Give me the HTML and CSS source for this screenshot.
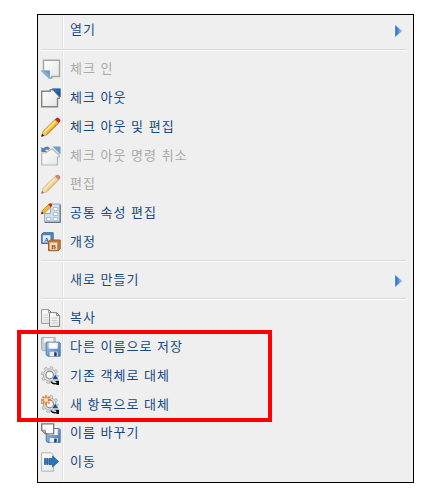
FILE: index.html
```
<!DOCTYPE html>
<html lang="ko">
    <head>
        <meta charset="UTF-8" />
        <meta name="viewport" content="width=device-width, initial-scale=1.0" />
        <title>Menu</title>
        <link rel="stylesheet" href="styles.css">
    </head>
    <body>
        <!-- shared shapes -->
        <svg class="defs" width="0" height="0">
            <defs>
                <linearGradient id="paper" x1="0" y1="0" x2="1" y2="1">
                    <stop offset="0" stop-color="#fff" />
                    <stop offset="1" stop-color="#e2e5e6" />
                </linearGradient>
                <linearGradient id="blue" x1="0" y1="0" x2="1" y2="1">
                    <stop offset="0" stop-color="#3f7fc4" />
                    <stop offset="1" stop-color="#0e4587" />
                </linearGradient>
                <linearGradient id="arrow" x1="0" y1="0" x2="1" y2="0">
                    <stop offset="0" stop-color="#1d64c4" />
                    <stop offset="1" stop-color="#8cc4fa" />
                </linearGradient>
                <linearGradient id="disk" x1="0" y1="0" x2="1" y2="1">
                    <stop offset="0" stop-color="#a9c6ea" />
                    <stop offset="1" stop-color="#4474b4" />
                </linearGradient>
                <g id="pencil">
                    <path d="M.4 19.5l1.8-5.4L14.6 2l3.5 3.5L5.8 17.7z" fill="#f3bf35" stroke="#a7762a" stroke-width=".7" />
                    <path d="M2.8 14.6L14.8 2.8l1.3 1.2L3.9 15.9z" fill="#ffe58a" />
                    <path d="M5 17.4L17.2 5.2l.7.7L5.8 17.9z" fill="#c98a20" />
                    <path d="M13.9 2.6l1.6-1.5c1.8-1.5 5 1.6 3.5 3.5l-1.6 1.6z" fill="#c3251d" />
                    <path d="M13.3 3.2l.8-.8 3.6 3.7-.8.8z" fill="#d9b060" />
                    <path d="M.3 19.6l1.9-5.1 1.5 1.3 1.9 1.8z" fill="#e8c99a" />
                    <path d="M.2 19.8l1-3 2 1.9z" fill="#2c1a08" />
                </g>
                <g id="gear">
                    <circle cx="8.7" cy="9" r="7.4" fill="none" stroke="#a2a2a2" stroke-width="2.6" stroke-dasharray="3.1 2.7" />
                    <circle cx="8.7" cy="9" r="6.3" fill="#e0e0e0" stroke="#a8a8a8" stroke-width="1" />
                    <circle cx="8.7" cy="9" r="7.2" fill="none" stroke="#e2e2e2" stroke-width="1.8" stroke-dasharray="2 3.65" stroke-dashoffset="-.5" />
                    <circle cx="8.7" cy="9" r="3.8" fill="#f5f5f5" stroke="#8c8c8c" stroke-width="1.2" />
                </g>
                <g id="swap">
                    <path d="M14.2 8l3.4 5.6h-6.6z" fill="#164f94" stroke="#eee" stroke-width=".5" />
                    <path d="M9.8 15.6c1.8 2.3 4 2.6 6 1.8" fill="none" stroke="#111" stroke-width="1.5" />
                    <path d="M14 14.8h4v4.2h-3l1-1.6z" fill="#111" />
                </g>
                <g id="floppy">
                    <path d="M.5.5h13l1 1v13H2L.5 13z" fill="url(#disk)" stroke="#527bb0" />
                    <path d="M3 1h9v6H3z" fill="#f7faff" />
                    <path d="M4 10h8v4.5H4z" fill="#e8edf4" />
                    <path d="M8.5 10.5H11v4H8.5z" fill="#183d70" />
                </g>
                <symbol id="submenu" viewBox="0 0 7 12">
                    <path d="M.4.4L6.5 6 .4 11.6z" fill="url(#arrow)" stroke="#448bd8" stroke-width=".6" />
                </symbol>
            </defs>
        </svg>

        <div class="screen">
            <ul class="menu">
                <li class="item">
                    <span class="icon"></span>
                    <span class="label">열기</span>
                    <svg class="more"><use href="#submenu" /></svg>
                </li>
                <li class="separator"></li>
                <li class="item disabled">
                    <svg class="icon" viewBox="0 0 20 20">
                        <path d="M2.5 11V1.3h16v16.2h-7.7v1.5H9" fill="url(#paper)" stroke="#a5a79f" stroke-width="1.4" />
                        <path d="M.3 11.8h8.2v8z" fill="#6e9bce" stroke="#6289b6" stroke-width=".6" />
                        <path d="M.5 12l3 .2 4.7 4.6v2.6z" fill="#88afd9" />
                    </svg>
                    <span class="label">체크 인</span>
                </li>
                <li class="item">
                    <svg class="icon" viewBox="0 0 20 20">
                        <path d="M.7 3.3h8.6V1.8h3l6 6.8v1.8h-1.8v8.4H.7z" fill="url(#paper)" stroke="#85877d" stroke-width="1.4" />
                        <path d="M11.3.8h8v8z" fill="url(#blue)" stroke="#164b8c" stroke-width=".6" />
                    </svg>
                    <span class="label">체크 아웃</span>
                </li>
                <li class="item">
                    <svg class="icon" viewBox="0 0 20 20"><use href="#pencil" /></svg>
                    <span class="label">체크 아웃 및 편집</span>
                </li>
                <li class="item disabled">
                    <svg class="icon" viewBox="0 0 20 20">
                        <path d="M.7 7v12h15.8v-8h1.8V9l-7-6L8 4.5 5 7z" fill="url(#paper)" stroke="#b8b9b3" stroke-width="1.2" />
                        <path d="M11.5.5h8v8z" fill="#6f9dce" />
                        <path d="M.3 1l2 1.6C4 .4 7 .3 9 2.3L7.3 4C6 3.2 5 3.3 4.2 4.2L6 6H.3z" fill="#557fae" />
                    </svg>
                    <span class="label">체크 아웃 명령 취소</span>
                </li>
                <li class="item disabled">
                    <svg class="icon faded" viewBox="0 0 20 20"><use href="#pencil" /></svg>
                    <span class="label">편집</span>
                </li>
                <li class="item">
                    <svg class="icon" viewBox="0 0 20 20">
                        <path d="M3.6 10.5h6V1h9.5v18.2H3.6z" fill="#d3e0ee" stroke="#9aabbd" />
                        <path d="M4 19.3h15.2V1.5" fill="none" stroke="#65768a" stroke-width="1.2" />
                        <path d="M12.3 4.5h4.4v3h-4.4zM12.3 9.5h4.4v3h-4.4zM12.3 14.5h4.4v3h-4.4zM5.5 14.5h4.4v3H5.5z" fill="#fff" stroke="#a4b9d0" stroke-width=".9" />
                        <path d="M.3 10.8l1.2-3.4L8.3.8l2.3 2.3-6.7 6.5z" fill="#f5b92c" stroke="#b07820" stroke-width=".7" />
                        <path d="M7.4 1.7L8.8.4c1.2-.9 3 .9 2.2 2.1L9.7 3.9z" fill="#c3251d" />
                        <path d="M.1 11.2l.8-2.5 1.7 1.6z" fill="#2c1a08" />
                    </svg>
                    <span class="label">공통 속성 편집</span>
                </li>
                <li class="item">
                    <svg class="icon" viewBox="0 0 20 20">
                        <path d="M.6 2.3l1.6-1.6h10v9l-1.6 1.8H.6z" fill="#5683b4" stroke="#42709f" />
                        <path d="M1.8 3.2h7.6v7.2H1.8z" fill="#e2edf8" />
                        <text x="5.6" y="9.6" class="letter letter-a">A</text>
                        <path d="M7.5 9.6L9.2 8h10v8.8l-1.7 1.9h-10z" fill="#bd7840" stroke="#9f5c2e" />
                        <path d="M8.6 10.5h7.7v7.2H8.6z" fill="#f8dfbc" />
                        <text x="12.5" y="16.9" class="letter letter-b">B</text>
                    </svg>
                    <span class="label">개정</span>
                </li>
                <li class="separator short"></li>
                <li class="item">
                    <span class="icon"></span>
                    <span class="label">새로 만들기</span>
                    <svg class="more"><use href="#submenu" /></svg>
                </li>
                <li class="separator short"></li>
                <li class="item">
                    <svg class="icon" viewBox="0 0 20 20">
                        <path d="M.6 1.6h7l3 3v10.8H.6z" fill="url(#paper)" stroke="#96968d" />
                        <path d="M7.6 1.6v3h3" fill="none" stroke="#96968d" />
                        <path d="M2.5 7h5M2.5 9.5h5M2.5 12h5" stroke="#d0d0cb" />
                        <path d="M8.6 4.6h7l3 3v10.8h-10z" fill="url(#paper)" stroke="#85857b" />
                        <path d="M15.6 4.6v3h3" fill="none" stroke="#85857b" />
                        <path d="M10.7 10h5.5M10.7 12.5h5.5M10.7 15h5.5" stroke="#c8c8c3" />
                    </svg>
                    <span class="label">복사</span>
                </li>
                <li class="item">
                    <svg class="icon" viewBox="0 0 20 20">
                        <path d="M.6.6h13.5v13H2L.6 12.5z" fill="#cbd0d4" stroke="#a5a9ad" />
                        <path d="M3 1h9v5H3z" fill="#f4f4f4" />
                        <use href="#floppy" x="4.7" y="4.7" />
                    </svg>
                    <span class="label">다른 이름으로 저장</span>
                </li>
                <li class="item">
                    <svg class="icon" viewBox="0 0 20 20">
                        <use href="#gear" />
                        <use href="#swap" />
                    </svg>
                    <span class="label">기존 객체로 대체</span>
                </li>
                <li class="item">
                    <svg class="icon" viewBox="0 0 20 20">
                        <use href="#gear" />
                        <use href="#swap" />
                        <path d="M5 0v10M0 5h10M1.5 1.5l7 7M8.5 1.5l-7 7" stroke="#ee6a2e" stroke-width="1.3" />
                        <circle cx="5" cy="5" r="2.2" fill="#ffe3a0" />
                    </svg>
                    <span class="label">새 항목으로 대체</span>
                </li>
                <li class="item">
                    <svg class="icon" viewBox="0 0 20 20">
                        <use href="#floppy" x="4.7" y="5" />
                        <path d="M.7.8h12v10H4.5L.7 7.2z" fill="#fcfcfc" stroke="#777970" stroke-width="1.3" />
                        <path d="M.7 7.2h3.8v3.6z" fill="#bbbcb6" stroke="#777970" stroke-width=".7" />
                    </svg>
                    <span class="label">이름 바꾸기</span>
                </li>
                <li class="item">
                    <svg class="icon" viewBox="0 0 20 20">
                        <path d="M.6.8h9.7l2.3 2.3v16.1H.6z" fill="url(#paper)" stroke="#b5b6a9" />
                        <path d="M3.5 6.5h1.3v6H3.5zM5.7 6.5h1.4v6H5.7zM8 6.5h3.6V4l6 5.5-6 5.5v-2.5H8z" fill="#2b75ba" stroke="#175391" stroke-width=".7" />
                    </svg>
                    <span class="label">이동</span>
                </li>
            </ul>
            <div class="highlight"></div>
        </div>
    </body>
</html>
```

FILE: styles.css
```
* {
    margin: 0;
    padding: 0;
    box-sizing: border-box;
}
body {
    background-color: #fff;
    font-family: "Noto Sans CJK KR", sans-serif;
    font-size: 13px;
    overflow: hidden;
}
.defs {
    position: absolute;
}
.screen {
    position: relative;
    height: 494px;
    padding: 14px 8px 11px 37px;
}
.menu {
    height: 469px;
    border: 1px solid #000;
    list-style: none;
    background: linear-gradient(90deg, #efefef 24px, #e2e2e2 24px, #e2e2e2 25px, #fbfbfb 25px, #fbfbfb 26px, #efefef 26px);
}
.item {
    display: flex;
    align-items: center;
    height: 28.8px;
    padding-left: 3px;
    color: #164a82;
}
.icon {
    width: 20px;
    height: 20px;
    margin-top: 2px;
    flex-shrink: 0;
}
.label {
    margin-left: 9px;
    line-height: 20px;
    letter-spacing: 1px;
    white-space: nowrap;
}
.disabled {
    color: #aaa;
}
.faded {
    opacity: 0.55;
}
.more {
    width: 7px;
    height: 12px;
    margin-top: 3px;
    margin-left: auto;
    margin-right: 11px;
}
.separator {
    display: flex;
    align-items: center;
    height: 10.1px;
}
.separator.short {
    height: 9.3px;
}
.separator::before {
    content: "";
    flex: 1;
    height: 4px;
    margin: 2px 7px 0 3px;
    background: linear-gradient(#efefef 1px, #d9d9d9 1px, #d9d9d9 2px, #fcfcfc 2px, #fcfcfc 3px, #efefef 3px);
}
.letter {
    font-family: "Liberation Serif", serif;
    font-size: 7px;
    font-weight: bold;
    text-anchor: middle;
}
.letter-a {
    fill: #1d5999;
}
.letter-b {
    fill: #96451f;
}
/* red frame over the menu */
.highlight {
    position: absolute;
    left: 17px;
    top: 330px;
    width: 255px;
    height: 92px;
    border: 4px solid #f00;
}
```
